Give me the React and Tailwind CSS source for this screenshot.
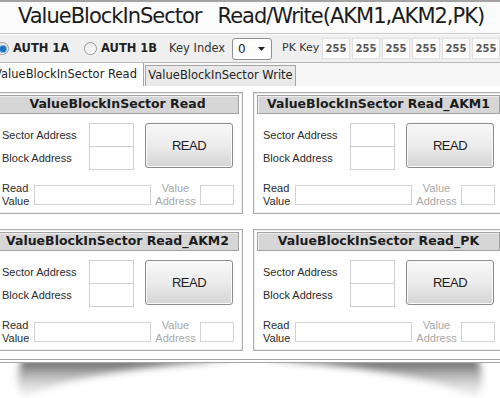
const sans = "font-['DejaVu_Sans',sans-serif]";

function Radio({ checked }) {
  return (
    <span className="flex h-[13px] w-[13px] shrink-0 items-center justify-center rounded-full border border-[#9a9a9a] bg-gradient-to-b from-[#e8e8e8] to-[#fdfdfd]">
      {checked && <span className="h-[6px] w-[6px] rounded-full bg-[#1f6fc0] shadow-[0_0_0_1px_#6aa4dc]" />}
    </span>
  );
}

function Panel({ title }) {
  return (
    <div className="h-[122px] w-[251px] shrink-0 border border-[#adadad] bg-white shadow-[inset_0_0_0_1px_#ececec]">
      <div className="mx-[3px] mt-[2px] flex h-[19px] items-center justify-center border border-[#a2a2a2] bg-[#d6d6d6] text-[12.5px] font-bold leading-none text-[#1c1c1c] shadow-[inset_1px_1px_0_#ececec]">
        {title}
      </div>
      <div className="mt-[9px] flex pl-[9px] font-['Liberation_Sans',sans-serif] text-[11px] text-[#2a2a2a]">
        <div className="flex w-[87px] flex-col">
          <div className="flex h-[24px] items-center">Sector Address</div>
          <div className="flex h-[23px] items-center">Block Address</div>
        </div>
        <div className="flex w-[45px] flex-col">
          <div className="h-[24px] border border-[#cfcfcf] bg-white" />
          <div className="-mt-px h-[24px] border border-[#cfcfcf] bg-white" />
        </div>
        <button
          type="button"
          className="ml-[11px] h-[45px] w-[88px] rounded-[3px] border border-[#8c8c8c] bg-gradient-to-b from-[#f7f7f7] via-[#ececec] to-[#d4d4d4] text-[13px] tracking-[-0.5px] text-[#1e1e1e] shadow-[inset_0_0_0_1px_#fafafa]"
        >
          READ
        </button>
      </div>
      <div className="mt-[12px] flex items-center pl-[9px] font-['Liberation_Sans',sans-serif] text-[11px] leading-[13px]">
        <div className="w-[32px] text-[#2a2a2a]">
          Read
          <br />
          Value
        </div>
        <div className="h-[20px] w-[117px] border border-[#d2d2d2] bg-white" />
        <div className="w-[49px] text-center text-[#a8a8a8]">
          Value
          <br />
          Address
        </div>
        <div className="h-[20px] w-[34px] border border-[#d2d2d2] bg-white" />
      </div>
    </div>
  );
}

export default function App() {
  return (
    <div className={`relative h-[398px] w-[500px] overflow-hidden bg-white ${sans}`}>
      {/* title bar */}
      <div className="flex h-[34px] items-center border-t-2 border-b border-[#a3a3a3] border-b-[#c6c6c6] bg-[#fbfbfb] pb-[1px] pl-[18px] text-[21px] tracking-[-1px] text-[#1b1b1b] whitespace-nowrap">
        <span>ValueBlockInSector</span>
        <span className="ml-[16px]">Read/Write(AKM1,AKM2,PK)</span>
      </div>

      {/* options row */}
      <div className="flex h-[29px] items-center border-t border-t-white border-b border-b-[#b9b9b9] bg-[#efefef] whitespace-nowrap">
        <span className="ml-[-4px]">
          <Radio checked />
        </span>
        <span className="ml-[4px] w-[57px] shrink-0 text-[11.5px] font-bold text-[#222]">AUTH 1A</span>
        <span className="ml-[14px]">
          <Radio />
        </span>
        <span className="ml-[4px] w-[57px] shrink-0 text-[11.5px] font-bold text-[#222]">AUTH 1B</span>
        <span className="ml-[11px] w-[58px] shrink-0 text-[11.5px] text-[#333]">Key Index</span>
        <div className="ml-[5px] flex h-[22px] w-[40px] shrink-0 items-center justify-between rounded-[3px] border border-[#8f8f8f] bg-white pl-[5px] pr-[6px] text-[12px] text-[#222]">
          <span>0</span>
          <svg width="7" height="4" viewBox="0 0 7 4">
            <path d="M0 0h7L3.5 4z" fill="#222" />
          </svg>
        </div>
        <span className="ml-[10px] w-[38px] shrink-0 text-[11px] text-[#333]">PK Key</span>
        <div className="ml-[2px] flex gap-[2px]">
          {[0, 1, 2, 3, 4, 5].map((i) => (
            <div
              key={i}
              className="flex h-[21px] w-[28px] shrink-0 items-center justify-center border border-[#e0e0e0] bg-[#fcfcfc] text-[10px] font-bold text-[#555]"
            >
              255
            </div>
          ))}
        </div>
      </div>

      {/* tabs */}
      <div className="flex h-[23px] items-end bg-[#f6f6f6] text-[11.5px] text-[#222] whitespace-nowrap">
        <div className="ml-[-12px] flex h-[23px] w-[156px] shrink-0 items-center justify-center border-r border-[#a5a5a5] bg-white">
          ValueBlockInSector Read
        </div>
        <div className="ml-[1px] flex h-[21px] w-[151px] shrink-0 items-center justify-center border border-b-0 border-[#a5a5a5] bg-[#e9e9e9]">
          ValueBlockInSector Write
        </div>
      </div>

      {/* panels */}
      <div className="ml-[-8px] flex w-[512px] flex-col gap-[15px] pt-[6px]">
        <div className="flex gap-[10px]">
          <Panel title="ValueBlockInSector Read" />
          <Panel title="ValueBlockInSector Read_AKM1" />
        </div>
        <div className="flex gap-[10px]">
          <Panel title="ValueBlockInSector Read_AKM2" />
          <Panel title="ValueBlockInSector Read_PK" />
        </div>
      </div>

      <div className="mt-[8px] h-[4px] border-y border-[#a4a4a4] bg-white" />

      {/* page curl shadow */}
      <svg width="500" height="36" viewBox="0 0 500 36" className="block">
        <defs>
          <linearGradient id="sh" x1="0" y1="0" x2="0" y2="1">
            <stop offset="0" stopColor="#2a2a2a" stopOpacity="0.8" />
            <stop offset="0.45" stopColor="#666" stopOpacity="0.4" />
            <stop offset="1" stopColor="#aaa" stopOpacity="0" />
          </linearGradient>
          <filter id="bl" x="-10%" y="-50%" width="120%" height="200%">
            <feGaussianBlur stdDeviation="3.5" />
          </filter>
        </defs>
        <g filter="url(#bl)">
          <path d="M22 -4H240Q150 2 90 14Q45 22 22 38Q14 18 22 -4Z" fill="url(#sh)" />
          <path d="M478 -4H260Q350 2 410 14Q455 22 478 38Q486 18 478 -4Z" fill="url(#sh)" />
        </g>
      </svg>
    </div>
  );
}
